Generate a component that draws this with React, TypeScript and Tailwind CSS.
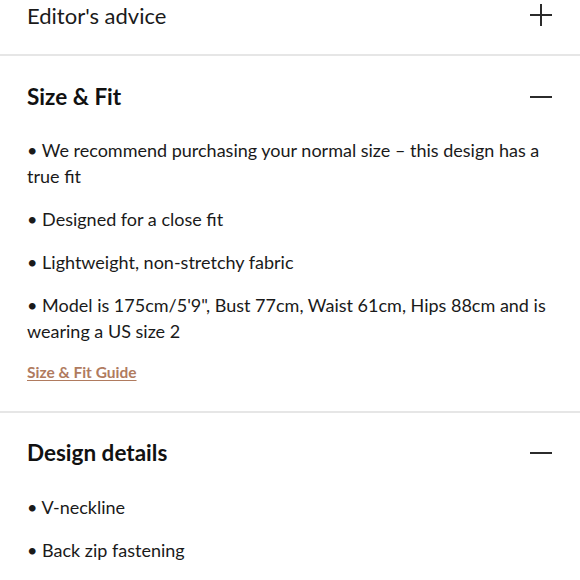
import React from 'react';

const font = { fontFamily: 'Lato, "Noto Sans", sans-serif' };

const Plus = () => (
    <svg width="24" height="24" viewBox="0 0 24 24" className="text-[#2b2b2b]">
        <path d="M1 12h22M12 1v22" stroke="currentColor" strokeWidth="2" fill="none" />
    </svg>
);

const Minus = () => (
    <svg width="24" height="24" viewBox="0 0 24 24" className="text-[#2b2b2b]">
        <path d="M1 12h22" stroke="currentColor" strokeWidth="2" fill="none" />
    </svg>
);

const Bullet = ({ children }: { children: React.ReactNode }) => (
    <p className="text-[18px] leading-[26px] text-[#1a1a1a] mb-[17px]">• {children}</p>
);

export default function App() {
    return (
        <div className="w-[580px] h-[580px] overflow-hidden bg-white" style={font}>
            {/* Editor's advice */}
            <div className="px-[27px] pb-[24px] border-b-2 border-[#e6e6e6]">
                <div className="h-[30px] flex items-center justify-between">
                    <span className="text-[22px] text-[#1a1a1a]">Editor's advice</span>
                    <Plus />
                </div>
            </div>

            {/* Size & Fit */}
            <div className="px-[27px] pt-[26px] pb-[26px] border-b-2 border-[#e6e6e6]">
                <div className="h-[30px] flex items-center justify-between">
                    <h3 className="text-[22.5px] font-bold text-[#111]">Size &amp; Fit</h3>
                    <Minus />
                </div>
                <div className="mt-[25px]">
                    <Bullet>We recommend purchasing your normal size – this design has a true fit</Bullet>
                    <Bullet>Designed for a close fit</Bullet>
                    <Bullet>Lightweight, non-stretchy fabric</Bullet>
                    <p className="text-[18px] leading-[26px] text-[#1a1a1a] mb-[15px]">• Model is 175cm/5'9", Bust 77cm, Waist 61cm, Hips 88cm and is wearing a US size 2</p>
                    <a className="text-[15.5px] leading-[26px] font-bold text-[#b07b5f] underline underline-offset-2">Size &amp; Fit Guide</a>
                </div>
            </div>

            {/* Design details */}
            <div className="px-[27px] pt-[25px]">
                <div className="h-[30px] flex items-center justify-between">
                    <h3 className="text-[22.5px] font-bold text-[#111]">Design details</h3>
                    <Minus />
                </div>
                <div className="mt-[26px]">
                    <Bullet>V-neckline</Bullet>
                    <Bullet>Back zip fastening</Bullet>
                </div>
            </div>
        </div>
    );
}
